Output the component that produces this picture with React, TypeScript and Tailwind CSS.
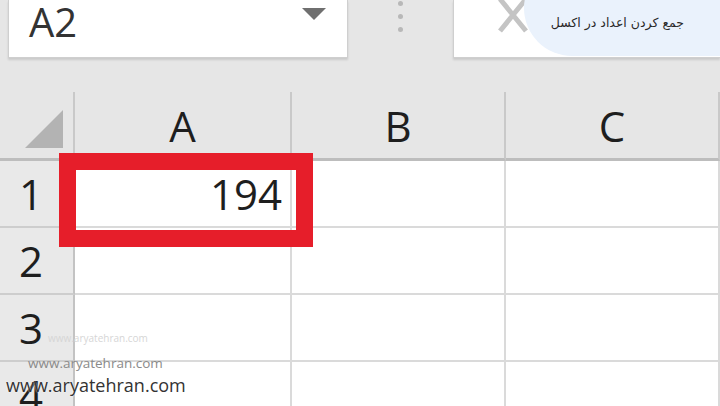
import React from 'react'

const cols = ['A', 'B', 'C']
const rows = [1, 2, 3, 4]

function SelectAll() {
  return (
    <svg width="38" height="38" viewBox="0 0 38 38" className="absolute left-[25px] top-[18px]">
      <polygon points="38,0 38,38 0,38" fill="#b3b3b3" />
    </svg>
  )
}

function CloseMark() {
  return (
    <svg width="32" height="38" viewBox="0 0 32 38" className="absolute left-[43px] top-[-4px]">
      <path d="M3 3 L29 35 M29 3 L3 35" stroke="#c4c4c4" strokeWidth="5" strokeLinecap="butt" />
    </svg>
  )
}

export default function App() {
  return (
    <div
      className="relative w-[720px] h-[406px] overflow-hidden bg-[#e6e6e6] text-[#1e1e1e]"
      style={{ fontFamily: '"Open Sans", "Noto Sans", sans-serif' }}
    >
      {/* toolbar: name box, splitter, formula bar */}
      <div className="flex h-[92px]">
        <div className="ml-[8px] w-[340px] h-[58px] bg-white border border-t-0 border-[#cfcfcf] shadow-[0_2px_2px_rgba(0,0,0,0.12)] flex items-start justify-between">
          <span className="pl-[20px] text-[40px] leading-[44px] text-[#333]">A2</span>
          <svg width="24" height="12" viewBox="0 0 24 12" className="mt-[8px] mr-[21px]">
            <polygon points="0,0 24,0 12,12" fill="#6f6f6f" />
          </svg>
        </div>
        <div className="w-[105px] flex flex-col items-center gap-[8px] pt-[1px]">
          <span className="w-[5px] h-[5px] rounded-full bg-[#b8b8b8]" />
          <span className="w-[5px] h-[5px] rounded-full bg-[#b8b8b8]" />
          <span className="w-[5px] h-[5px] rounded-full bg-[#b8b8b8]" />
        </div>
        <div className="relative flex-1 h-[58px] bg-white border-l border-b border-[#cfcfcf] shadow-[0_2px_2px_rgba(0,0,0,0.12)] overflow-hidden">
          <CloseMark />
          <div className="absolute left-[70px] top-[-40px] w-[260px] h-[96px] rounded-l-[60px] bg-[#eaf2fc]" />
          <div
            dir="rtl"
            className="absolute right-[36px] top-[13px] text-[12.5px] leading-[20px] text-[#2a2a2a]"
            style={{ fontFamily: '"DejaVu Sans", "Noto Sans", sans-serif' }}
          >
            جمع کردن اعداد در اکسل
          </div>
        </div>
      </div>

      {/* sheet grid */}
      <div className="grid grid-cols-[75px_217px_214px_1fr]">
        <div className="relative h-[69px] border-r-2 border-b-[3px] border-r-[#c9c9c9] border-b-[#bdbdbd]">
          <SelectAll />
        </div>
        {cols.map(c => (
          <div
            key={c}
            className="h-[69px] flex items-center justify-center text-[42px] border-r-2 border-b-[3px] border-r-[#c9c9c9] border-b-[#bdbdbd] last:border-r-0"
          >
            {c}
          </div>
        ))}

        {rows.map(r => (
          <React.Fragment key={r}>
            <div className="h-[67px] bg-[#e9e9e9] flex items-center pl-[19px] text-[42px] border-r-2 border-b-2 border-r-[#c3c3c3] border-b-[#cdcdcd]">
              {r}
            </div>
            {cols.map(c => (
              <div
                key={c}
                className="relative h-[67px] bg-white border-r-2 border-b-2 border-[#dadada] flex items-center justify-end pr-[8px] text-[42px]"
              >
                {r === 1 && c === 'A' && (
                  <>
                    <span className="relative z-10">194</span>
                    <div className="absolute left-[-16px] top-[-8px] w-[254px] h-[94px] border-[17px] border-[#e61e2a] z-20" />
                  </>
                )}
              </div>
            ))}
          </React.Fragment>
        ))}
      </div>

      {/* watermarks */}
      <div className="absolute left-[48px] top-[331px] text-[10px] text-[#d6d6d6]">www.aryatehran.com</div>
      <div className="absolute left-[28px] top-[353px] text-[13.5px] text-[#8a8a8a]">www.aryatehran.com</div>
      <div className="absolute left-[6px] top-[372px] text-[18px] leading-[26px] text-[#333] [text-shadow:0_0_2px_#fff]">
        www.aryatehran.com
      </div>
    </div>
  )
}
